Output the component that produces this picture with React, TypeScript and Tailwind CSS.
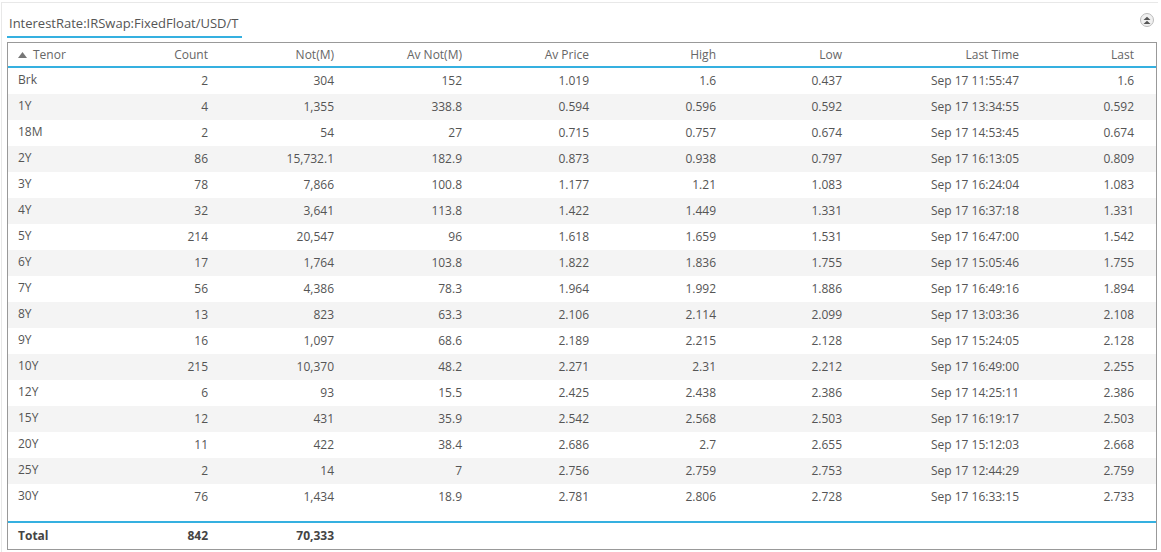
import React from "react";

const rows: string[][] = [
  ["Brk","2","304","152","1.019","1.6","0.437","Sep 17 11:55:47","1.6"],
  ["1Y","4","1,355","338.8","0.594","0.596","0.592","Sep 17 13:34:55","0.592"],
  ["18M","2","54","27","0.715","0.757","0.674","Sep 17 14:53:45","0.674"],
  ["2Y","86","15,732.1","182.9","0.873","0.938","0.797","Sep 17 16:13:05","0.809"],
  ["3Y","78","7,866","100.8","1.177","1.21","1.083","Sep 17 16:24:04","1.083"],
  ["4Y","32","3,641","113.8","1.422","1.449","1.331","Sep 17 16:37:18","1.331"],
  ["5Y","214","20,547","96","1.618","1.659","1.531","Sep 17 16:47:00","1.542"],
  ["6Y","17","1,764","103.8","1.822","1.836","1.755","Sep 17 15:05:46","1.755"],
  ["7Y","56","4,386","78.3","1.964","1.992","1.886","Sep 17 16:49:16","1.894"],
  ["8Y","13","823","63.3","2.106","2.114","2.099","Sep 17 13:03:36","2.108"],
  ["9Y","16","1,097","68.6","2.189","2.215","2.128","Sep 17 15:24:05","2.128"],
  ["10Y","215","10,370","48.2","2.271","2.31","2.212","Sep 17 16:49:00","2.255"],
  ["12Y","6","93","15.5","2.425","2.438","2.386","Sep 17 14:25:11","2.386"],
  ["15Y","12","431","35.9","2.542","2.568","2.503","Sep 17 16:19:17","2.503"],
  ["20Y","11","422","38.4","2.686","2.7","2.655","Sep 17 15:12:03","2.668"],
  ["25Y","2","14","7","2.756","2.759","2.753","Sep 17 12:44:29","2.759"],
  ["30Y","76","1,434","18.9","2.781","2.806","2.728","Sep 17 16:33:15","2.733"],
];
const heads = ["Count","Not(M)","Av Not(M)","Av Price","High","Low","Last Time","Last"];
const grid = "grid grid-cols-[100px_100px_126px_128px_127px_127px_126px_177px_115px_22px] items-center";

export default function App() {
  return (
    <div className="w-[1161px] h-[552px] bg-white pt-[2px] pl-[1px] pr-[3px]" style={{ fontFamily: '"Open Sans", sans-serif' }}>
      <div className="border-t border-l border-[#e8e8e8] h-[550px] pl-[5px] pr-[1px]">
        <div className="flex items-center justify-between h-[38px]">
          <div className="text-[13px] text-[#555] border-b-2 border-[#35b0e0] pl-[2px] pr-[4px] pt-[8px] pb-[3px]">InterestRate:IRSwap:FixedFloat/USD/T</div>
          <div className="w-[14px] h-[14px] rounded-full border border-[#bbb] bg-[#f0f0f0] flex items-center justify-center mr-[3px] -mt-[4px]">
            <svg width="8" height="9" viewBox="0 0 8 9"><path d="M0.5 4 L4 0.8 L7.5 4 Z M0.5 8 L4 4.8 L7.5 8 Z" fill="#555"/></svg>
          </div>
        </div>
        <div className="border border-[#999] h-[508px] mt-[1px] text-[12px] text-[#555] flex flex-col">
          <div className={grid + " h-[25px] text-[#666] border-b-2 border-[#35b0e0]"}>
            <div className="pl-[10px] flex items-center gap-[6px]">
              <svg width="9" height="6" viewBox="0 0 9 6"><path d="M0 6 L4.5 0 L9 6 Z" fill="#777"/></svg>Tenor
            </div>
            {heads.map((h) => <div key={h} className="text-right">{h}</div>)}
            <div />
          </div>
          {rows.map((r, i) => (
            <div key={r[0]} className={grid + " h-[26px] " + (i % 2 ? "bg-[#f4f4f4]" : "bg-white")}>
              <div className="pl-[10px] -mt-[2px]">{r[0]}</div>
              {r.slice(1).map((c, j) => <div key={j} className="text-right">{c}</div>)}
              <div />
            </div>
          ))}
          <div className="flex-1 border-b-2 border-[#35b0e0]" />
          <div className={grid + " h-[26px] font-bold text-[#444]"}>
            <div className="pl-[10px]">Total</div>
            <div className="text-right">842</div>
            <div className="text-right">70,333</div>
          </div>
        </div>
      </div>
    </div>
  );
}
